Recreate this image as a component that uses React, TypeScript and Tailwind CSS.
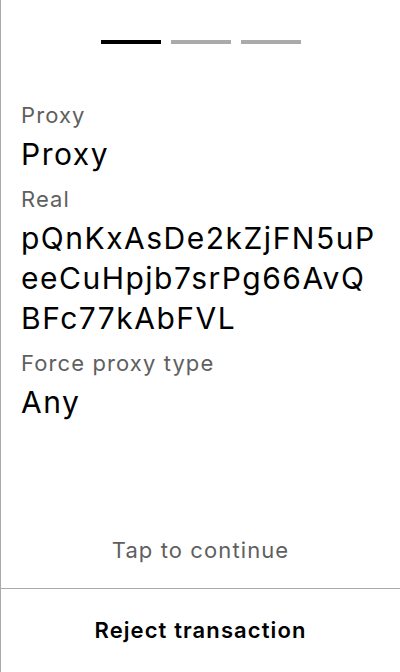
import React from "react";

const Label = ({ children }: { children: React.ReactNode }) => (
  <div className="text-[22px] leading-[28px] tracking-wider text-[#5f5f5f]">{children}</div>
);
const Value = ({ children }: { children: React.ReactNode }) => (
  <div className="text-[30px] leading-[40px] tracking-wider text-black mt-[5px] mb-[11px] break-all">{children}</div>
);

export default function App() {
  return (
    <div
      className="w-[400px] h-[672px] bg-white border-l border-[#aaaaaa] flex flex-col"
      style={{ fontFamily: "Inter, 'Noto Sans', sans-serif" }}
    >
      <div className="flex justify-center gap-[10px] pt-10">
        <div className="w-[60px] h-1 bg-black" />
        <div className="w-[60px] h-1 bg-[#aaaaaa]" />
        <div className="w-[60px] h-1 bg-[#aaaaaa]" />
      </div>
      <div className="px-5 pt-[57px] flex-1">
        <Label>Proxy</Label>
        <Value>Proxy</Value>
        <Label>Real</Label>
        <Value>pQnKxAsDe2kZjFN5uPeeCuHpjb7srPg66AvQBFc77kAbFVL</Value>
        <Label>Force proxy type</Label>
        <Value>Any</Value>
      </div>
      <div className="text-center text-[22px] leading-[28px] tracking-wider text-[#5f5f5f] pb-[24px]">Tap to continue</div>
      <div className="border-t border-[#aaaaaa] h-[84px] flex items-center justify-center">
        <span className="text-[22px] font-semibold tracking-wider text-black">Reject transaction</span>
      </div>
    </div>
  );
}
